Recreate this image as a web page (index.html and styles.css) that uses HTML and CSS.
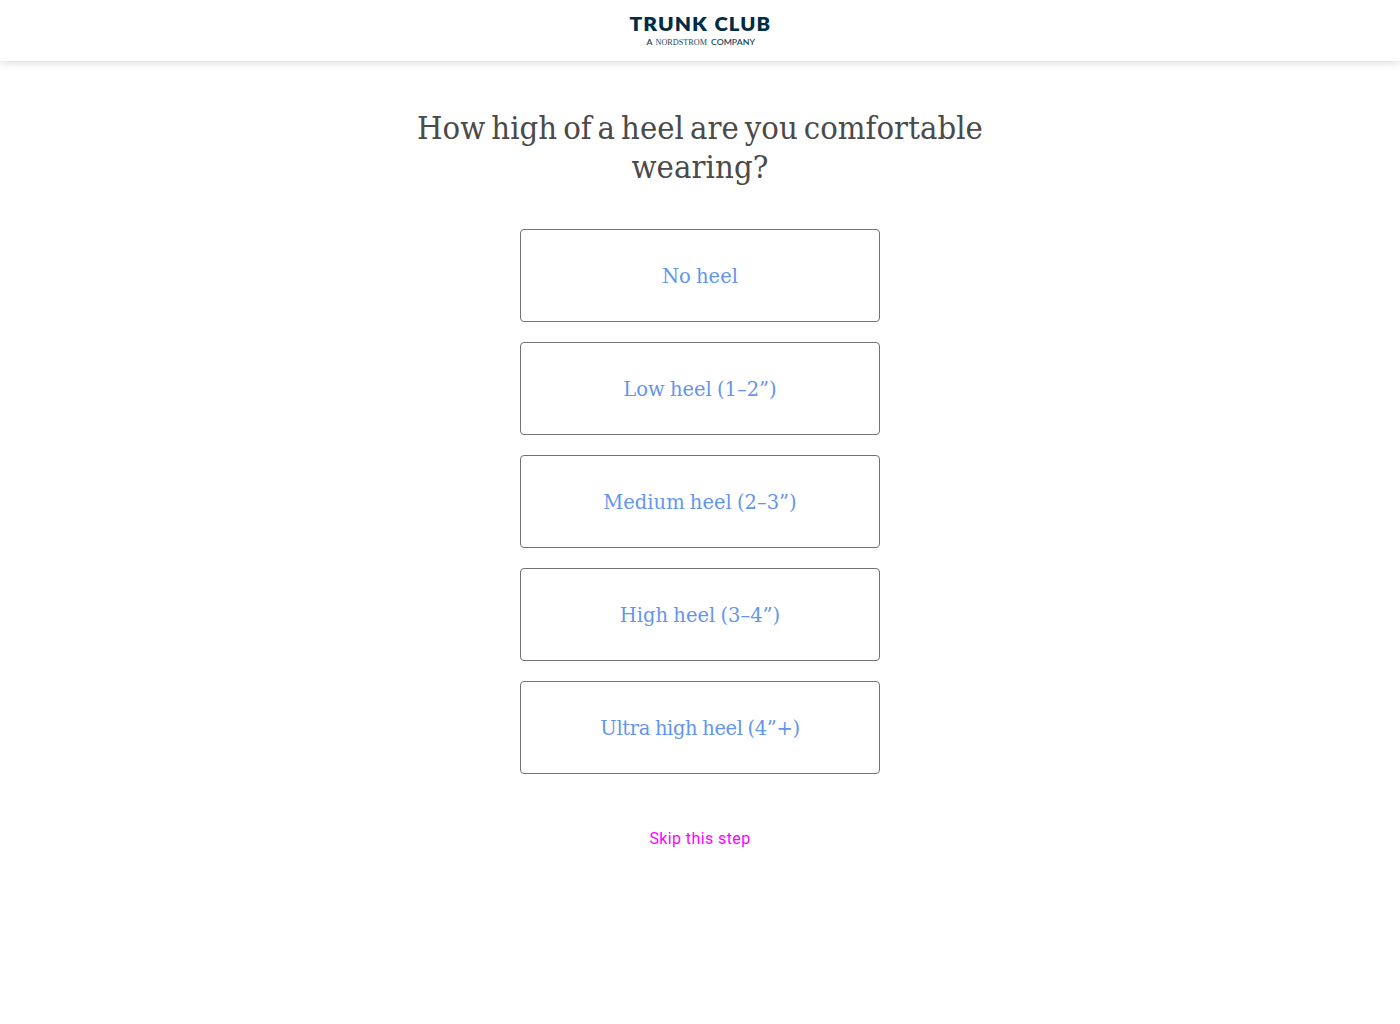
FILE: index.html
```html
<!DOCTYPE html>
<html lang="en">
<head>
<meta charset="utf-8">
<title>Trunk Club</title>
<link rel="stylesheet" href="styles.css">
</head>
<body>
<header class="header">
  <svg class="logo" width="150" height="44" viewBox="0 0 150 44" role="img" aria-label="Trunk Club, a Nordstrom company">
    <text class="logo-name" x="4.5" y="23" textLength="78.5" lengthAdjust="spacingAndGlyphs">TRUNK</text>
    <text class="logo-name" x="89.5" y="23" textLength="56.5" lengthAdjust="spacingAndGlyphs">CLUB</text>
    <text class="logo-tag" x="21.5" y="37" textLength="6" lengthAdjust="spacingAndGlyphs">A</text>
    <text class="logo-tag logo-serif" x="30.5" y="37" textLength="51.5" lengthAdjust="spacingAndGlyphs">NORDSTROM</text>
    <text class="logo-tag" x="86" y="37" textLength="44" lengthAdjust="spacingAndGlyphs">COMPANY</text>
  </svg>
</header>
<main class="content">
  <h1 class="title"><span class="line">How high of a heel are you comfortable</span> <span class="line line-last">wearing?</span></h1>
  <div class="options">
    <button class="option">No heel</button>
    <button class="option">Low heel (1–2”)</button>
    <button class="option">Medium heel (2–3”)</button>
    <button class="option">High heel (3–4”)</button>
    <button class="option option-tight">Ultra high heel (4”+)</button>
  </div>
  <a class="skip">Skip this step</a>
</main>
</body>
</html>
```
FILE: styles.css
```css
body {
  margin: 0;
  background: #fff;
}

.header {
  display: flex;
  justify-content: center;
  height: 53px;
  padding-top: 8px;
  box-shadow: 0 0 10px rgba(0, 0, 0, 0.2);
}

.logo {
  display: block;
}

.logo-name {
  font: 800 19.5px Lato, sans-serif;
  letter-spacing: 1px;
  fill: #002d46;
}

.logo-tag {
  font: 600 7.6px Lato, sans-serif;
  fill: #25485d;
}

.logo-serif {
  font: 400 8.5px "Liberation Serif", serif;
}

.content {
  display: flex;
  flex-direction: column;
  align-items: center;
  padding-top: 48px;
}

.title {
  margin: 0;
  font: 400 32.5px/39px "DejaVu Serif Condensed", "DejaVu Serif", serif;
  letter-spacing: 0.05px;
  word-spacing: -3.4px;
  color: #4a4a4a;
  text-align: center;
}

.line {
  display: block;
}

.line-last {
  letter-spacing: 0.1px;
}

.options {
  display: flex;
  flex-direction: column;
  gap: 20px;
  width: 360px;
  margin-top: 42px;
}

.option {
  box-sizing: border-box;
  height: 93px;
  padding: 2px 0 0;
  border: 1px solid #737373;
  border-radius: 4px;
  background: #fff;
  font: 400 19.5px/24px "DejaVu Serif", serif;
  word-spacing: -1px;
  color: #6495ed;
}

.option-tight {
  letter-spacing: -0.35px;
  word-spacing: -1px;
}

.skip {
  margin-top: 54px;
  font: 400 16px/22px Roboto, sans-serif;
  letter-spacing: 0.4px;
  color: #f0f;
}
```
